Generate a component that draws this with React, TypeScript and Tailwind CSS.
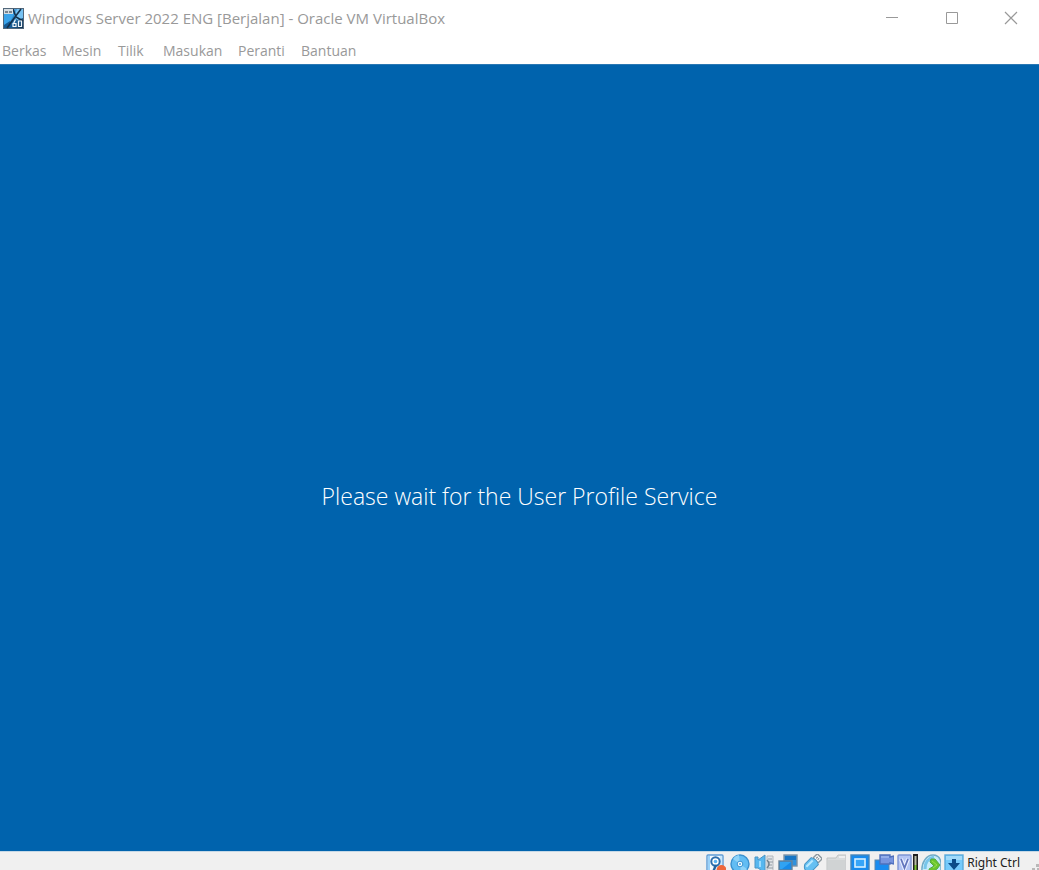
import React from "react";

const menus = [
  { label: "Berkas", width: "w-[60px]" },
  { label: "Mesin", width: "w-[56px]" },
  { label: "Tilik", width: "w-[45px]" },
  { label: "Masukan", width: "w-[75px]" },
  { label: "Peranti", width: "w-[63px]" },
  { label: "Bantuan", width: "w-[72px]" },
];

function AppIcon() {
  return (
    <svg viewBox="0 0 21 21" className="size-[21px] shrink-0" aria-hidden="true">
      <defs>
        <linearGradient id="appBg" x1="0" y1="0" x2="1" y2="1">
          <stop offset="0" stopColor="#b9d3e8" />
          <stop offset="0.4" stopColor="#2f8fd6" />
          <stop offset="1" stopColor="#0c2d4c" />
        </linearGradient>
      </defs>
      <rect width="21" height="21" fill="#52677a" />
      <rect x="1" y="1" width="19" height="19" fill="url(#appBg)" />
      <path d="M1 6h10l-4 8-6 3z" fill="#3ba4ea" />
      <path d="M14 1h6v9l-6 2-3-4z" fill="#78c2f2" />
      <path d="M1 17l6-4 3 7H1z" fill="#155a94" />
      <path d="M10 1l3 8 7 4M18 1l-6 8-8 11" stroke="#14304a" strokeWidth="1.600" fill="none" />
      <rect x="1" y="1" width="9" height="5" fill="#d5dde3" />
      <path d="M2 3h3v2H2zM6 3h3v2H6z" fill="#7a858f" />
      <path d="M12.500 11.500l-2 4M10 15.500h3v3h-3zM15.500 13h3v5.500h-3z" stroke="#f1f6fa" strokeWidth="1.200" fill="none" />
    </svg>
  );
}

function DiskIcon() {
  return (
    <>
      <rect x="1" y="1" width="16" height="19" rx="1" fill="#f4faff" stroke="#5d9cd6" strokeWidth="1.400" />
      <path d="M2 2h2v17H2z" fill="#9bd2fa" />
      <path d="M14 2h2v12h-2z" fill="#c8e7fc" />
      <circle cx="9.500" cy="7.500" r="4.200" fill="#fff" stroke="#2c6dab" strokeWidth="2" />
      <circle cx="9.500" cy="7.500" r="1.800" fill="#5db4f2" />
      <path d="M10 11l-3 7" stroke="#24639f" strokeWidth="2.400" />
      <circle cx="15.500" cy="16" r="5" fill="#ee673a" />
    </>
  );
}

function DiscIcon() {
  return (
    <>
      <circle cx="10" cy="10" r="9" fill="#62bdf3" stroke="#3a91cf" strokeWidth="1.400" />
      <path d="M10 10L3 5a8 8 0 0 1 6-4zM10 10l7 5a8 8 0 0 1-6 4z" fill="#8ed3f8" />
      <circle cx="10" cy="10" r="2.800" fill="#f3fbff" stroke="#3993d1" />
      <circle cx="10" cy="10" r="1" fill="#4ea5dd" />
    </>
  );
}

function AudioIcon() {
  return (
    <>
      <path d="M13 2h6v16h-6z" fill="#e1e4e7" stroke="#b3b8bd" />
      <path d="M14 5h4M14 8h5M14 11h4M14 14h5" stroke="#939ca4" />
      <path d="M1 3h3v3l7-5v18l-7-5H1z" fill="#55b7ef" stroke="#4b94c4" />
      <path d="M6 7v6" stroke="#9bdcff" strokeWidth="2" />
      <path d="M13 6q4 4 0 8" fill="none" stroke="#71808b" strokeWidth="1.500" />
    </>
  );
}

function NetworkIcon() {
  return (
    <>
      <rect x="6" y="1" width="13" height="11" fill="#2f91dc" stroke="#7d93a5" strokeWidth="1.400" />
      <path d="M7 2h11v4H7z" fill="#1675c5" />
      <rect x="1" y="7" width="13" height="9" fill="#168bea" stroke="#66839a" strokeWidth="1.400" />
      <path d="M2 8h11l-9 7H2z" fill="#30a3f3" />
      <path d="M4 18h7" stroke="#687681" strokeWidth="2" />
    </>
  );
}

function UsbIcon() {
  return (
    <g transform="rotate(45 10 10)">
      <rect x="6.500" y="-1" width="7" height="6" rx="1" fill="#f2f4f5" stroke="#8b969d" strokeWidth="1.400" />
      <path d="M9 1v2M11 1v2" stroke="#737d84" />
      <path d="M5 6q5-3 10 0v9q-2 4-5 4t-5-4z" fill="#65c0f2" stroke="#4594c5" />
      <path d="M8 7v9" stroke="#b8e9ff" strokeWidth="2" />
    </g>
  );
}

function FolderIcon() {
  return (
    <>
      <path d="M1 18V4h9l2-3h8v17z" fill="#d9dcdd" stroke="#c0c3c4" />
      <path d="M2 6h17v12H2z" fill="#d0d3d4" />
      <path d="M13 3h6" stroke="#f4f5f5" strokeWidth="1.500" />
    </>
  );
}

function DisplayIcon() {
  return (
    <>
      <rect x="1" y="1" width="18" height="17" fill="#178bed" stroke="#4687ba" strokeWidth="1.400" />
      <rect x="5" y="5" width="10" height="8" fill="#36a5f8" stroke="#d6f1ff" strokeWidth="1.600" />
    </>
  );
}

function RecordIcon() {
  return (
    <>
      <rect x="1" y="6" width="14" height="12" fill="#198cf0" stroke="#5b86ab" />
      <path d="M6 1h10v2l4-1v8l-4-1v1H6z" fill="#7795df" stroke="#4f70bc" strokeWidth="1.400" />
      <path d="M7 3h8" stroke="#adc5f5" />
    </>
  );
}

function MouseIcon() {
  return (
    <>
      <path d="M1 18C0 8 6 1 12 1q7 0 8 8v9z" fill="#c7ebf9" stroke="#70aac6" strokeWidth="1.400" />
      <path d="M4 15C4 8 8 4 13 3" fill="none" stroke="#78c5ea" strokeWidth="3" />
      <path d="M10 5h4l5 6-3 4-7 4-1-4 5-3-4-4z" fill="#6ac52e" stroke="#52aa42" />
      <path d="M11 7l5 4-4 3" fill="none" stroke="#96de4c" />
    </>
  );
}

function KeyIcon() {
  return (
    <>
      <rect x="1" y="1" width="18" height="19" fill="#75cafb" stroke="#5babdc" strokeWidth="1.400" />
      <path d="M2 2h16v4H2z" fill="#a1dafa" />
      <path d="M8 5h4v4h4l-6 7-6-7h4z" fill="#0b4c88" />
    </>
  );
}

const indicators = [
  { name: "Hard disk", art: <DiskIcon /> },
  { name: "Optical drive", art: <DiscIcon /> },
  { name: "Audio", art: <AudioIcon /> },
  { name: "Network", art: <NetworkIcon /> },
  { name: "USB", art: <UsbIcon /> },
  { name: "Shared folders", art: <FolderIcon /> },
  { name: "Display", art: <DisplayIcon /> },
  { name: "Recording", art: <RecordIcon /> },
];

function Indicator({ name, children }: { name: string; children: React.ReactNode }) {
  return (
    <button type="button" aria-label={name} className="size-5 shrink-0 overflow-hidden">
      <svg viewBox="0 0 20 20" className="size-5">{children}</svg>
    </button>
  );
}

export default function App() {
  return (
    <div className="flex h-screen flex-col overflow-hidden bg-white font-['Open_Sans','Noto_Sans',sans-serif]">
      <header className="flex h-9 shrink-0 items-center pl-[3px]">
        <AppIcon />
        <h1 className="ml-1 text-[15px] whitespace-nowrap text-[#999999]">
          Windows Server 2022 ENG [Berjalan] - Oracle VM VirtualBox
        </h1>
        <div className="ml-auto flex h-full text-[#999999]">
          <button type="button" aria-label="Minimize" className="flex w-[60px] items-center justify-center">
            <svg viewBox="0 0 14 14" className="size-3.5"><path d="M1 6.500h12" stroke="currentColor" /></svg>
          </button>
          <button type="button" aria-label="Maximize" className="flex w-[60px] items-center justify-center">
            <svg viewBox="0 0 14 14" className="size-3.5"><path d="M1.500 1.500h11v11h-11z" fill="none" stroke="currentColor" /></svg>
          </button>
          <button type="button" aria-label="Close" className="flex w-[57px] items-center justify-center">
            <svg viewBox="0 0 14 14" className="size-3.5"><path d="M1 1l12 12M13 1L1 13" stroke="currentColor" strokeWidth="1.200" /></svg>
          </button>
        </div>
      </header>
      <nav aria-label="Menu" className="flex h-7 shrink-0 items-center pt-px pl-0.5 text-[14px] text-[#999999]">
        {menus.map((menu) => (
          <button key={menu.label} type="button" className={`${menu.width} text-left`}>{menu.label}</button>
        ))}
      </nav>
      <main className="flex min-h-0 flex-1 items-center justify-center border-t border-[#2a78b4] bg-[#0063ad] pt-[76px]">
        <p className="text-center text-[23px] font-light text-white">Please wait for the User Profile Service</p>
      </main>
      <footer className="flex h-[19px] shrink-0 items-start justify-end overflow-hidden border-t border-[#c5d8e6] bg-[#f0f0f0] pt-0.5">
        <div className="flex gap-1">
          {indicators.map((item) => (
            <Indicator key={item.name} name={item.name}>{item.art}</Indicator>
          ))}
        </div>
        <button type="button" aria-label="Virtualization" className="ml-[3px] flex h-5 gap-px">
          <svg viewBox="0 0 15 20" className="h-5 w-[15px]">
            <rect x="1" y="1" width="13" height="19" rx="1" fill="#b4c5f4" stroke="#7d95d4" strokeWidth="1.400" />
            <path d="M4 5l3.500 9L11 5" fill="none" stroke="#e9efff" strokeWidth="4" />
            <path d="M4 5l3.500 9L11 5" fill="none" stroke="#6275bd" strokeWidth="1.800" />
          </svg>
          <svg viewBox="0 0 5 20" className="h-5 w-[5px]">
            <path d="M0 0h5v20H0z" fill="#202020" />
            <path d="M1.500 2h2v9h-2z" fill="#b8bda6" />
            <path d="M1.500 11h2v8h-2z" fill="#78c52c" />
          </svg>
        </button>
        <div className="ml-[3px] flex gap-[3px]">
          <Indicator name="Mouse integration"><MouseIcon /></Indicator>
          <Indicator name="Keyboard capture"><KeyIcon /></Indicator>
        </div>
        <span className="mt-0.5 ml-[3px] font-['Noto_Sans','Open_Sans',sans-serif] text-[12px] leading-[14px] whitespace-nowrap text-[#202020]">
          Right Ctrl
        </span>
        <svg viewBox="0 0 7 18" className="ml-3 h-[18px] w-[7px]" aria-hidden="true">
          <path d="M4 10h3v3H4zM0 14h3v3H0zM5 14h2v3H5z" fill="#b9b9b9" />
        </svg>
      </footer>
    </div>
  );
}
